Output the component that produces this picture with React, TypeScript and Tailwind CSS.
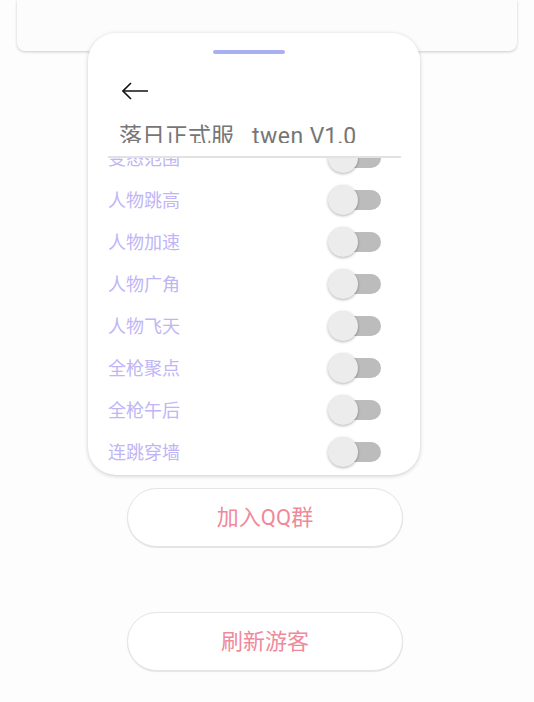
import React from "react";

const items = ["变态范围", "人物跳高", "人物加速", "人物广角", "人物飞天", "全枪聚点", "全枪午后", "连跳穿墙"];

function Toggle() {
  return (
    <div className="relative w-[53px] h-[30px] flex items-center">
      <div className="absolute left-[8px] w-[45px] h-[20px] rounded-full bg-[#bcbcbc]" />
      <div className="absolute left-0 w-[30px] h-[30px] rounded-full bg-[#ececec] shadow-[0_1px_3px_rgba(0,0,0,0.3)]" />
    </div>
  );
}

export default function App() {
  return (
    <div className="min-h-[702px] w-[534px] bg-[#fdfdfd] overflow-hidden" style={{ fontFamily: 'Roboto, "Noto Sans CJK SC", sans-serif' }}>
      <div className="mx-[17px] h-[51px] rounded-b-[8px] bg-[#fcfcfc] shadow-[0_1px_3px_rgba(0,0,0,0.2)]" />
      <div className="relative ml-[88px] mt-[-18px] w-[332px] h-[442px] rounded-[28px] bg-white shadow-[0_1px_4px_rgba(0,0,0,0.2)] overflow-hidden flex flex-col">
        <div className="flex justify-center pt-[17px] pr-[10px]">
          <div className="w-[72px] h-[4px] rounded-full bg-[#a9b0f2]" />
        </div>
        <div className="pl-[34px] pt-[28px]">
          <svg width="26" height="18" viewBox="0 0 26 18" fill="none" stroke="#111" strokeWidth="1.6" className="block">
            <path d="M1 9 H26" />
            <path d="M9 1 L1 9 L9 17" />
          </svg>
        </div>
        <div className="ml-[31px] mt-[12px] h-[31px] overflow-hidden shrink-0">
          <div className="pt-[13px] text-[23px] leading-[23px] text-[#767676] whitespace-nowrap">
            <span>落日正式服</span>
            <span className="ml-[18px] tracking-[0.5px]">twen</span>
            <span className="ml-[6px]">V1.0</span>
          </div>
        </div>
        <div className="ml-[20px] mr-[19px] mt-[13px] h-[2px] bg-[#e2e2e2] relative z-10 shrink-0" />
        <div className="flex-1 overflow-hidden">
          <div className="mt-[-21px] flex flex-col">
            {items.map((t) => (
              <div key={t} className="h-[42px] flex items-center justify-between pl-[20px] pr-[39px] shrink-0">
                <span className="text-[18px] text-[#c0b5f6]">{t}</span>
                <Toggle />
              </div>
            ))}
          </div>
        </div>
      </div>
      <div className="ml-[127px] mt-[13px] w-[276px] flex flex-col gap-[65px]">
        {["加入QQ群", "刷新游客"].map((t) => (
          <div key={t} className="h-[59px] rounded-full bg-white border border-[#e4e4e4] shadow-[0_1px_1px_rgba(0,0,0,0.1)] flex items-center justify-center">
            <span className="text-[22px] text-[#f0899a]">{t}</span>
          </div>
        ))}
      </div>
    </div>
  );
}
